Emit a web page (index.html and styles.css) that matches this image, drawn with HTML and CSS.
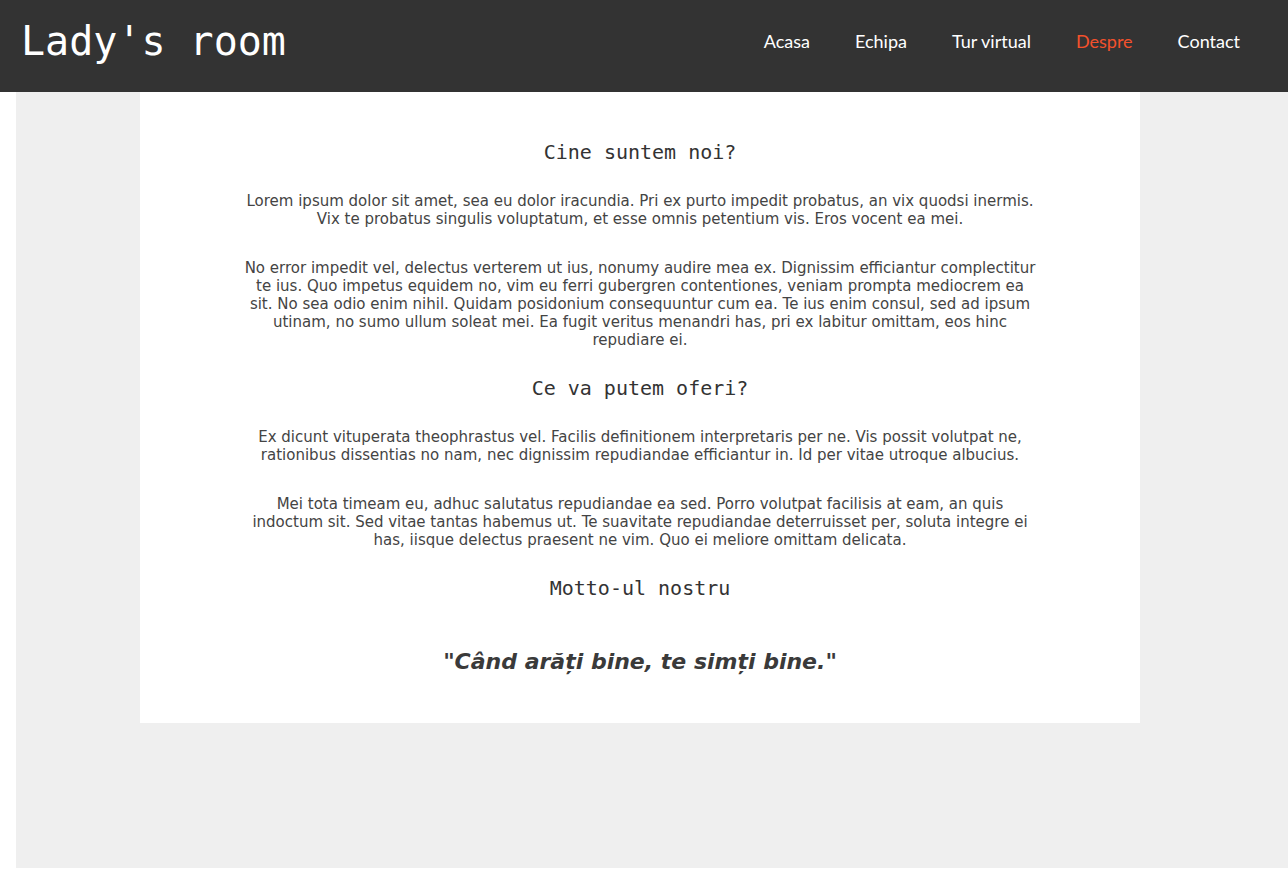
FILE: index.html
```html
<!DOCTYPE html>
<html lang="ro">
<head>
<meta charset="utf-8">
<title>Lady's room - Despre</title>
<link rel="stylesheet" href="styles.css">
</head>
<body>
<header class="topbar">
  <div class="logo">Lady's room</div>
  <nav class="nav">
    <a href="#">Acasa</a>
    <a href="#">Echipa</a>
    <a href="#">Tur virtual</a>
    <a href="#" class="active">Despre</a>
    <a href="#">Contact</a>
  </nav>
</header>
<main class="page">
  <article class="content">
    <section class="block">
      <h2>Cine suntem noi?</h2>
      <p>Lorem ipsum dolor sit amet, sea eu dolor iracundia. Pri ex purto impedit probatus, an vix quodsi inermis. Vix te probatus singulis voluptatum, et esse omnis petentium vis. Eros vocent ea mei.</p>
      <p>No error impedit vel, delectus verterem ut ius, nonumy audire mea ex. Dignissim efficiantur complectitur te ius. Quo impetus equidem no, vim eu ferri gubergren contentiones, veniam prompta mediocrem ea sit. No sea odio enim nihil. Quidam posidonium consequuntur cum ea. Te ius enim consul, sed ad ipsum utinam, no sumo ullum soleat mei. Ea fugit veritus menandri has, pri ex labitur omittam, eos hinc repudiare ei.</p>
    </section>
    <section class="block">
      <h2>Ce va putem oferi?</h2>
      <p>Ex dicunt vituperata theophrastus vel. Facilis definitionem interpretaris per ne. Vis possit volutpat ne, rationibus dissentias no nam, nec dignissim repudiandae efficiantur in. Id per vitae utroque albucius.</p>
      <p>Mei tota timeam eu, adhuc salutatus repudiandae ea sed. Porro volutpat facilisis at eam, an quis indoctum sit. Sed vitae tantas habemus ut. Te suavitate repudiandae deterruisset per, soluta integre ei has, iisque delectus praesent ne vim. Quo ei meliore omittam delicata.</p>
    </section>
    <section class="block">
      <h2>Motto-ul nostru</h2>
      <p class="motto">"Când arăți bine, te simți bine."</p>
    </section>
  </article>
</main>
</body>
</html>
```
FILE: styles.css
```css
html, body {
  margin: 0;
  padding: 0;
  background: #ffffff;
}

.topbar {
  height: 92px;
  background: #333333;
  display: flex;
  align-items: center;
  justify-content: space-between;
  padding: 0 48px 0 21px;
  box-sizing: border-box;
}

.logo {
  font-family: "DejaVu Sans Mono", "Liberation Mono", monospace;
  font-size: 40px;
  color: #ffffff;
  line-height: 1;
  margin-top: -10px;
}

.nav {
  display: flex;
  gap: 45px;
  margin-top: -10px;
}

.nav a {
  font-family: "Lato", "Open Sans", sans-serif;
  font-size: 18px;
  color: #ffffff;
  text-decoration: none;
}

.nav a.active {
  color: #f4512c;
}

.page {
  margin: 0 0 1px 16px;
  background: #efefef;
  height: 776px;
}

.content {
  margin-left: 124px;
  width: 1000px;
  background: #ffffff;
  box-sizing: border-box;
  padding: 48px 103px 46px;
  text-align: center;
  color: #444444;
}

.block h2 {
  font-family: "DejaVu Sans Mono", "Liberation Mono", monospace;
  font-size: 20px;
  font-weight: normal;
  line-height: 24px;
  color: #333333;
  margin: 0 0 28px;
}

.block p {
  font-family: "DejaVu Sans", "Verdana", sans-serif;
  font-size: 15px;
  line-height: 18px;
  margin: 0 0 31px;
}

.block p:last-child {
  margin-bottom: 27px;
}

.block p.motto {
  font-size: 22px;
  line-height: 30px;
  font-weight: bold;
  font-style: italic;
  color: #3a3a3a;
  margin: 47px 0 0;
}
```
